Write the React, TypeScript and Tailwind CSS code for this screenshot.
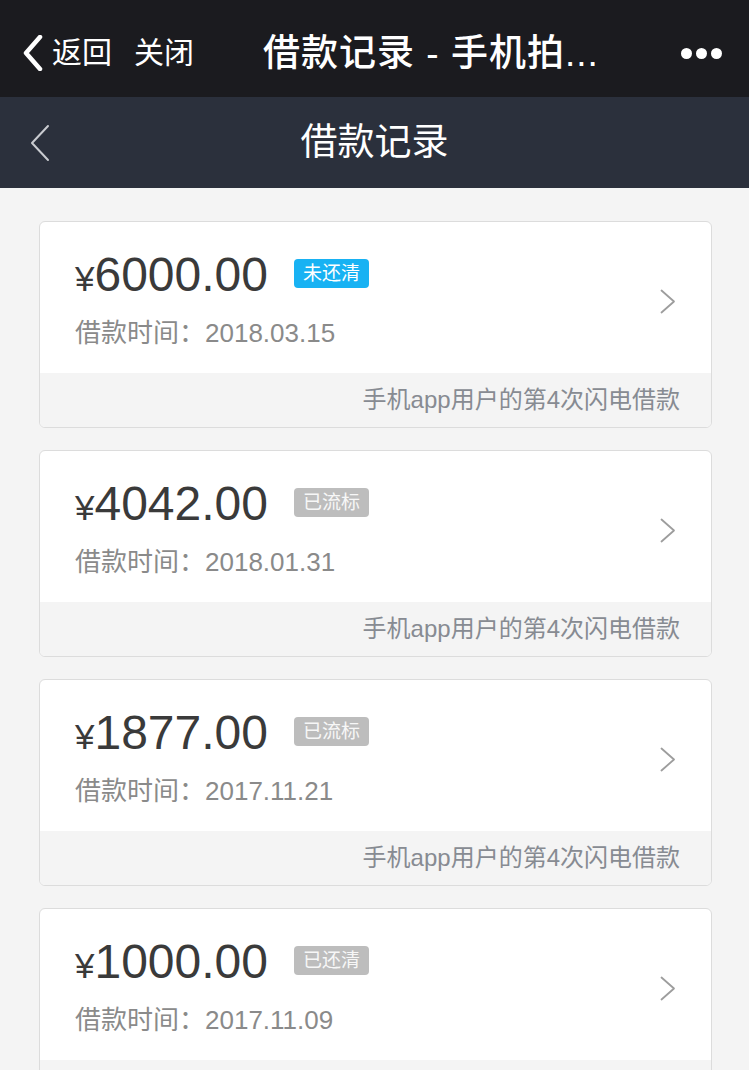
import React from "react";

const font = { fontFamily: '"Liberation Sans", "Noto Sans CJK SC", sans-serif' };

type Loan = { amount: string; status: string; blue?: boolean; date: string };

const loans: Loan[] = [
  { amount: "6000.00", status: "未还清", blue: true, date: "2018.03.15" },
  { amount: "4042.00", status: "已流标", date: "2018.01.31" },
  { amount: "1877.00", status: "已流标", date: "2017.11.21" },
  { amount: "1000.00", status: "已还清", date: "2017.11.09" },
];

function Card({ loan }: { loan: Loan }) {
  return (
    <div className="border border-[#dcdcdc] rounded-[6px] bg-white overflow-hidden">
      <div className="h-[151px] flex items-start justify-between pl-[35px] pr-[35px]">
        <div className="flex flex-col pt-[25px]">
          <div className="flex items-center h-[56px]">
            <span className="text-[#3a3a3a] leading-none whitespace-nowrap">
              <span className="text-[35px]">¥</span>
              <span className="text-[48px]">{loan.amount}</span>
            </span>
            <span
              className={
                "ml-[26px] -mt-[3px] h-[29px] w-[75px] rounded-[4px] flex items-center justify-center text-[19px] leading-none " +
                (loan.blue ? "bg-[#18b2f3] text-white" : "bg-[#bdbdbd] text-[#f7f7f7]")
              }
            >
              {loan.status}
            </span>
          </div>
          <div className="mt-[12px] h-[36px] flex items-center text-[26px] text-[#8a8a8a] whitespace-nowrap">
            借款时间：{loan.date}
          </div>
        </div>
        <div className="self-center mt-[8px]">
          <svg width="16" height="25" viewBox="0 0 16 25" fill="none">
            <path d="M1.5 1.5 L14 12.5 L1.5 23.5" stroke="#9d9d9d" strokeWidth="1.8" strokeLinecap="round" strokeLinejoin="round" />
          </svg>
        </div>
      </div>
      <div className="h-[54px] bg-[#f4f4f4] flex items-center justify-end pr-[31px] text-[24px] text-[#878b92]">
        手机app用户的第4次闪电借款
      </div>
    </div>
  );
}

export default function App() {
  return (
    <div className="min-h-screen bg-[#f4f4f4]" style={font}>
      <div className="h-[97px] bg-[#1b1b1f] flex items-center pt-[9px] text-white">
        <svg className="ml-[22px]" width="22" height="36" viewBox="0 0 22 36" fill="none">
          <path d="M18 2 L4 18 L18 34" stroke="white" strokeWidth="4.5" strokeLinecap="round" strokeLinejoin="round" />
        </svg>
        <span className="ml-[8px] text-[30px] leading-none">返回</span>
        <span className="ml-[22px] text-[30px] leading-none">关闭</span>
        <span className="ml-[69px] text-[37px] tracking-[1px] leading-none font-medium whitespace-nowrap">借款记录 - 手机拍...</span>
        <div className="ml-auto mr-[27px] flex items-center gap-[4px]">
          <span className="w-[11px] h-[11px] rounded-full bg-white" />
          <span className="w-[11px] h-[11px] rounded-full bg-white" />
          <span className="w-[11px] h-[11px] rounded-full bg-white" />
        </div>
      </div>
      <div className="h-[91px] bg-[#2b303c] grid grid-cols-[1fr_auto_1fr] items-center">
        <div className="pl-[29px] flex items-center">
          <svg width="22" height="38" viewBox="0 0 22 38" fill="none">
            <path d="M19 2 L3 19 L19 36" stroke="#c9cbd0" strokeWidth="2" strokeLinecap="round" strokeLinejoin="round" />
          </svg>
        </div>
        <div className="text-[37px] text-white leading-none">借款记录</div>
        <div />
      </div>
      <div className="pt-[33px] pl-[39px] pr-[37px] pb-[30px] flex flex-col gap-[22px]">
        {loans.map((l, i) => (
          <Card key={i} loan={l} />
        ))}
      </div>
    </div>
  );
}
